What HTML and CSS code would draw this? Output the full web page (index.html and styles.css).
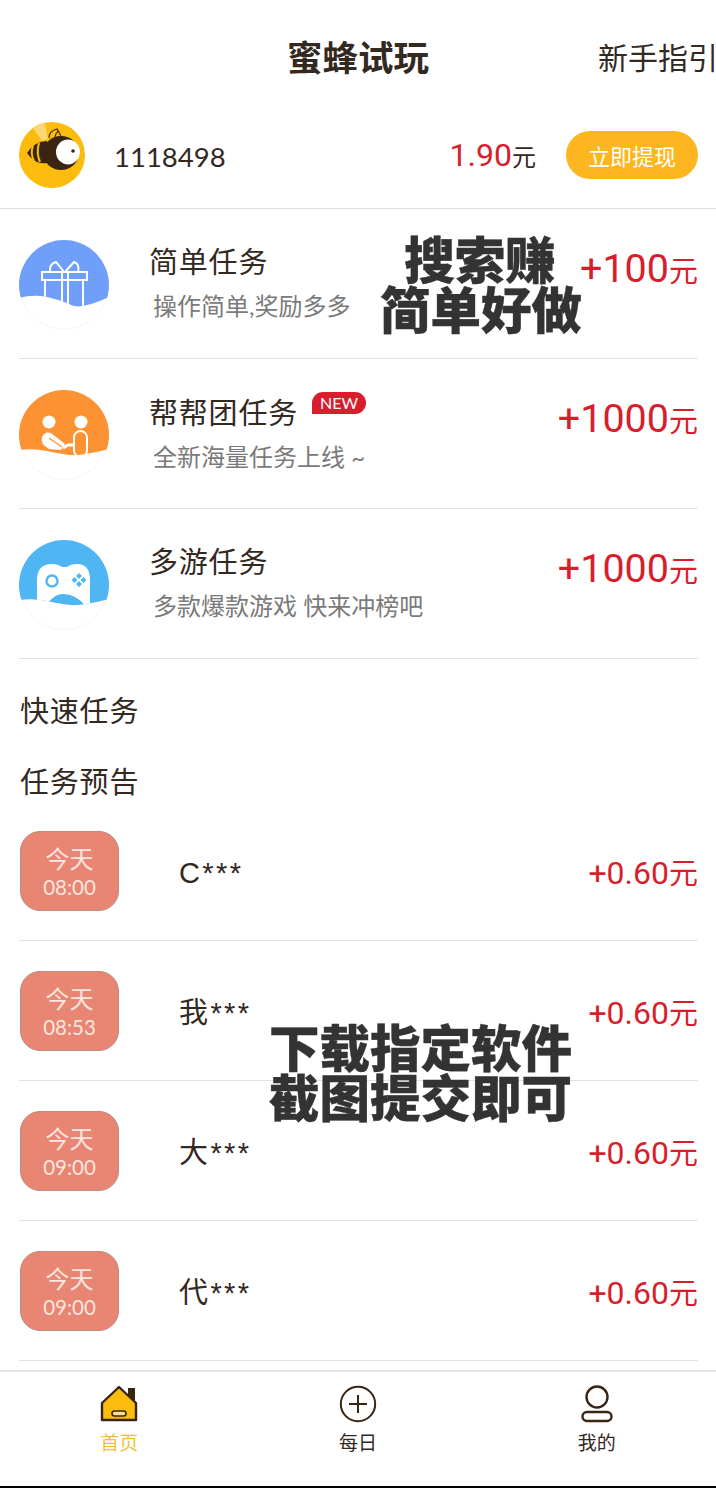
FILE: index.html
```html
<!DOCTYPE html>
<html lang="zh-CN">
<head>
    <meta charset="UTF-8">
    <meta name="viewport" content="width=device-width, initial-scale=1.0">
    <title>蜜蜂试玩</title>
    <link rel="stylesheet" href="styles.css">
</head>
<body>
    <div class="app">
        <header class="topbar">
            <h1>蜜蜂试玩</h1>
            <a class="guide">新手指引</a>
        </header>

        <section class="user">
            <svg class="avatar" viewBox="0 0 66 66">
                <circle cx="33" cy="33" r="33" fill="#fbbc0d"/>
                <path d="M14 6 q6 -6 12 -4 l3 15 l-6 2z" fill="#fcd874"/>
                <path d="M30 16 q0 -7 8 -9 l4 7 M36 15 q1 -5 4 -6" fill="none" stroke="#3a2412" stroke-width="1.1"/>
                <path d="M8 31 q8 -12 20 -12 v22 q-12 2 -20 -10z" fill="#3a2412"/>
                <path d="M14 24 q-3 7 1 15 M20 21 q-3 10 1 19" stroke="#fbbc0d" stroke-width="2" fill="none"/>
                <ellipse cx="42" cy="31" rx="18" ry="17" fill="#3a2412"/>
                <ellipse cx="49" cy="30" rx="12" ry="12.5" fill="#fff"/>
                <circle cx="54" cy="29" r="1.8" fill="#3a2412"/>
            </svg>
            <span class="user-id">1118498</span>
            <span class="balance">1.90<small>元</small></span>
            <button class="withdraw">立即提现</button>
        </section>

        <section class="tasks">
            <div class="task">
                <svg class="task-icon" viewBox="0 0 90 90">
                    <defs><clipPath id="c1"><path d="M0 58 q14 -4 28 -1 t24 8 t38 -8 V0 H0z"/></clipPath></defs>
                    <circle cx="45" cy="45" r="44.5" fill="#fff" stroke="#f6f6f6"/>
                    <circle cx="45" cy="45" r="45" fill="#6f9ff8" clip-path="url(#c1)"/>
                    <g fill="none" stroke="#fff" stroke-width="2" clip-path="url(#c1)">
                        <rect x="23" y="32" width="45" height="8"/>
                        <path d="M26 40 V70 H64 V40 M43 32 V70 M49 32 V70"/>
                        <path d="M45 32 L37 22 Q30 24 31 32 M46 32 L55 22 Q61 24 59 32"/>
                    </g>
                </svg>
                <div class="task-text">
                    <div class="task-title">简单任务</div>
                    <div class="task-desc">操作简单,奖励多多</div>
                </div>
                <div class="reward">+100<small>元</small></div>
            </div>
            <div class="task">
                <svg class="task-icon" viewBox="0 0 90 90">
                    <defs><clipPath id="c2"><path d="M0 60 q14 -2 28 1 t24 4 t38 -6 V0 H0z"/></clipPath></defs>
                    <circle cx="45" cy="45" r="44.5" fill="#fff" stroke="#f6f6f6"/>
                    <circle cx="45" cy="45" r="45" fill="#fd9232" clip-path="url(#c2)"/>
                    <g clip-path="url(#c2)">
                        <circle cx="30" cy="32" r="6.5" fill="#fff"/>
                        <circle cx="62" cy="32" r="6.5" fill="#fff"/>
                        <path d="M23 47 q3 -6 9 -4 l14 11 l-4 6 l-12 -1 q-9 -5 -7 -12z" fill="#fff"/>
                        <path d="M30 48 l13 9" stroke="#fd9232" stroke-width="1.2"/>
                        <path d="M44 58 l5 -3 h6" fill="none" stroke="#fff" stroke-width="3"/>
                        <rect x="55" y="41" width="13" height="26" rx="6.5" fill="none" stroke="#fff" stroke-width="2"/>
                    </g>
                </svg>
                <div class="task-text">
                    <div class="task-title">帮帮团任务<span class="new-tag">NEW</span></div>
                    <div class="task-desc">全新海量任务上线 ~</div>
                </div>
                <div class="reward">+1000<small>元</small></div>
            </div>
            <div class="task">
                <svg class="task-icon" viewBox="0 0 90 90">
                    <defs><clipPath id="c3"><path d="M0 60 q14 -2 28 1 t24 4 t38 -6 V0 H0z"/></clipPath></defs>
                    <circle cx="45" cy="45" r="44.5" fill="#fff" stroke="#f6f6f6"/>
                    <circle cx="45" cy="45" r="45" fill="#4fb5f3" clip-path="url(#c3)"/>
                    <g clip-path="url(#c3)">
                        <path d="M18 68 V40 q0 -16 15 -16 q6 0 10 3 h5 q4 -3 10 -3 q13 0 13 16 V68 H68 q-10 -14 -24 -14 q-8 0 -14 8 l-6 6z" fill="#fff"/>
                        <circle cx="33" cy="41" r="5.5" fill="none" stroke="#4fb5f3" stroke-width="2.4"/>
                        <path d="M60 33 l3 3 l-3 3 l-3 -3z M60 41 l3 3 l-3 3 l-3 -3z M55.500 37 l3 3 l-3 3 l-3 -3z M64.500 37 l3 3 l-3 3 l-3 -3z" fill="#4fb5f3"/>
                    </g>
                </svg>
                <div class="task-text">
                    <div class="task-title">多游任务</div>
                    <div class="task-desc">多款爆款游戏 快来冲榜吧</div>
                </div>
                <div class="reward">+1000<small>元</small></div>
            </div>
        </section>

        <h2 class="quick">快速任务</h2>
        <h2 class="preview-title">任务预告</h2>

        <section class="previews">
            <div class="preview">
                <div class="time"><span>今天</span><span class="clock">08:00</span></div>
                <div class="preview-name">C***</div>
                <div class="preview-reward">+0.60<small>元</small></div>
            </div>
            <div class="preview">
                <div class="time"><span>今天</span><span class="clock">08:53</span></div>
                <div class="preview-name">我***</div>
                <div class="preview-reward">+0.60<small>元</small></div>
            </div>
            <div class="preview">
                <div class="time"><span>今天</span><span class="clock">09:00</span></div>
                <div class="preview-name">大***</div>
                <div class="preview-reward">+0.60<small>元</small></div>
            </div>
            <div class="preview">
                <div class="time"><span>今天</span><span class="clock">09:00</span></div>
                <div class="preview-name">代***</div>
                <div class="preview-reward">+0.60<small>元</small></div>
            </div>
        </section>

        <nav class="tabbar">
            <div class="tab tab-active">
                <svg viewBox="0 0 38 38" width="38" height="38">
                    <path d="M28 3 h7 v20 h-7z" fill="#3a2412"/>
                    <path d="M19 2 L36 18 V35 H2 V18z" fill="#fbbc0d" stroke="#3a2412" stroke-width="2.4" stroke-linejoin="round"/>
                    <rect x="12" y="26" width="14" height="5" rx="2.5" fill="#fde08a" stroke="#3a2412" stroke-width="1.6"/>
                </svg>
                <span>首页</span>
            </div>
            <div class="tab">
                <svg viewBox="0 0 38 38" width="38" height="38">
                    <circle cx="19" cy="19" r="17.2" fill="none" stroke="#3a2412" stroke-width="2"/>
                    <path d="M19 10 V28 M10 19 H28" stroke="#3a2412" stroke-width="2"/>
                </svg>
                <span>每日</span>
            </div>
            <div class="tab">
                <svg viewBox="0 0 38 38" width="38" height="38">
                    <ellipse cx="19" cy="12" rx="10.5" ry="10.5" fill="none" stroke="#3a2412" stroke-width="2.4"/>
                    <rect x="4.5" y="27" width="29" height="9" rx="4.5" fill="none" stroke="#3a2412" stroke-width="2.4"/>
                </svg>
                <span>我的</span>
            </div>
        </nav>

        <div class="caption caption-top">搜索赚<br>简单好做</div>
        <div class="caption caption-bottom">下载指定软件<br>截图提交即可</div>
    </div>
</body>
</html>
```

FILE: styles.css
```css
* {
    box-sizing: border-box;
}

body {
    margin: 0;
    background: #fff;
    color: #33291f;
    font-family: "Lato", "Noto Sans CJK SC", sans-serif;
}

.app {
    position: relative;
    width: 716px;
    height: 1488px;
    overflow: hidden;
    border-bottom: 2px solid #000;
}

.topbar {
    position: relative;
    height: 118px;
    display: flex;
    justify-content: center;
    padding-top: 33px;
}

.topbar h1 {
    margin: 0;
    font-size: 35.5px;
    line-height: 46px;
    font-weight: 700;
    font-family: "Noto Sans CJK SC", sans-serif;
}

.guide {
    position: absolute;
    left: 598px;
    top: 37px;
    font-size: 30px;
    line-height: 40px;
    white-space: nowrap;
}

.user {
    height: 91px;
    display: flex;
    align-items: center;
    padding: 0 18px 17px 19px;
    border-bottom: 1px solid #ddd;
}

.avatar {
    width: 66px;
    height: 66px;
}

.user-id {
    flex: 1;
    margin-left: 29px;
    font-size: 27.5px;
    margin-top: 3px;
}

.balance {
    color: #d81e2c;
    font-family: "Roboto", "Noto Sans CJK SC", sans-serif;
    font-size: 32px;
    margin-top: 1px;
}

.balance small {
    color: #33291f;
    font-size: 24px;
}

.withdraw {
    width: 132px;
    height: 48px;
    margin-left: 30px;
    border: none;
    border-radius: 24px;
    background: #fdb61f;
    color: #fff;
    font-size: 22px;
    font-family: "Noto Sans CJK SC", sans-serif;
}

.tasks {
    padding: 0 18px 0 19px;
}

.task {
    height: 150px;
    display: flex;
    align-items: center;
    border-bottom: 1px solid #e2e2e2;
}

.task-icon {
    width: 90px;
    height: 90px;
    flex: none;
    margin-top: 3px;
}

.task-text {
    flex: 1;
    margin-left: 40px;
}

.task-title {
    font-size: 29px;
    line-height: 40px;
    letter-spacing: 0.8px;
    margin-top: -3px;
}

.task-desc {
    margin: 8px 0 0 4px;
    color: #7a7a7a;
    font-size: 24px;
    line-height: 32px;
}

.new-tag {
    display: inline-block;
    vertical-align: 15px;
    margin-left: 14px;
    padding: 0 8px;
    height: 22px;
    border-radius: 11px 11px 11px 0;
    background: #d81e2c;
    color: #fff;
    font-size: 16px;
    line-height: 22px;
    letter-spacing: 0;
}

.reward {
    color: #d81e2c;
    font-family: "Roboto", "Noto Sans CJK SC", sans-serif;
    font-size: 39.5px;
    line-height: 50px;
    margin-top: -26px;
}

.reward small {
    font-size: 29px;
}

.quick, .preview-title {
    margin: 0 0 0 20px;
    font-size: 29px;
    font-weight: 400;
    line-height: 40px;
    letter-spacing: 0.8px;
}

.quick {
    margin-top: 32px;
}

.preview-title {
    margin-top: 31px;
}

.previews {
    padding: 0 18px 0 19px;
    margin-top: -1px;
}

.preview {
    height: 140px;
    display: flex;
    align-items: center;
    border-bottom: 1px solid #e2e2e2;
}

.time {
    width: 99px;
    height: 80px;
    margin: 0 0 0 1px;
    padding-top: 4px;
    display: flex;
    flex-direction: column;
    align-items: center;
    justify-content: center;
    border: 1px solid #bb8d84;
    border-radius: 20px;
    background: #e88573;
    color: #fde6df;
    font-size: 24px;
    line-height: 29px;
}

.clock {
    font-size: 20.5px;
}

.preview-name {
    flex: 1;
    margin: 4px 0 0 60px;
    font-size: 29px;
    line-height: 40px;
    letter-spacing: 2.4px;
    font-family: "Liberation Sans", "Noto Sans CJK SC", sans-serif;
}

.preview-reward {
    color: #d81e2c;
    font-family: "Roboto", "Noto Sans CJK SC", sans-serif;
    font-size: 32px;
}

.preview-reward small {
    font-size: 29px;
}

.tabbar {
    position: absolute;
    left: 0;
    right: 0;
    bottom: 0;
    height: 116px;
    display: flex;
    border-top: 2px solid #e2e2e2;
}

.tab {
    flex: 1;
    display: flex;
    flex-direction: column;
    align-items: center;
    padding-top: 13px;
    font-size: 19px;
    line-height: 26px;
}

.tab span {
    margin-top: 7px;
}

.tab-active {
    color: #f2bf3b;
}

.caption {
    position: absolute;
    color: #333;
    font-family: "Noto Sans CJK SC", sans-serif;
    font-size: 50.5px;
    font-weight: 900;
    line-height: 50px;
    text-align: center;
    white-space: nowrap;
    -webkit-text-stroke: 0.4px #333;
}

.caption-top {
    left: 380px;
    width: 200px;
    top: 232px;
}

.caption-bottom {
    left: 269px;
    width: 300px;
    top: 1020px;
}
```
